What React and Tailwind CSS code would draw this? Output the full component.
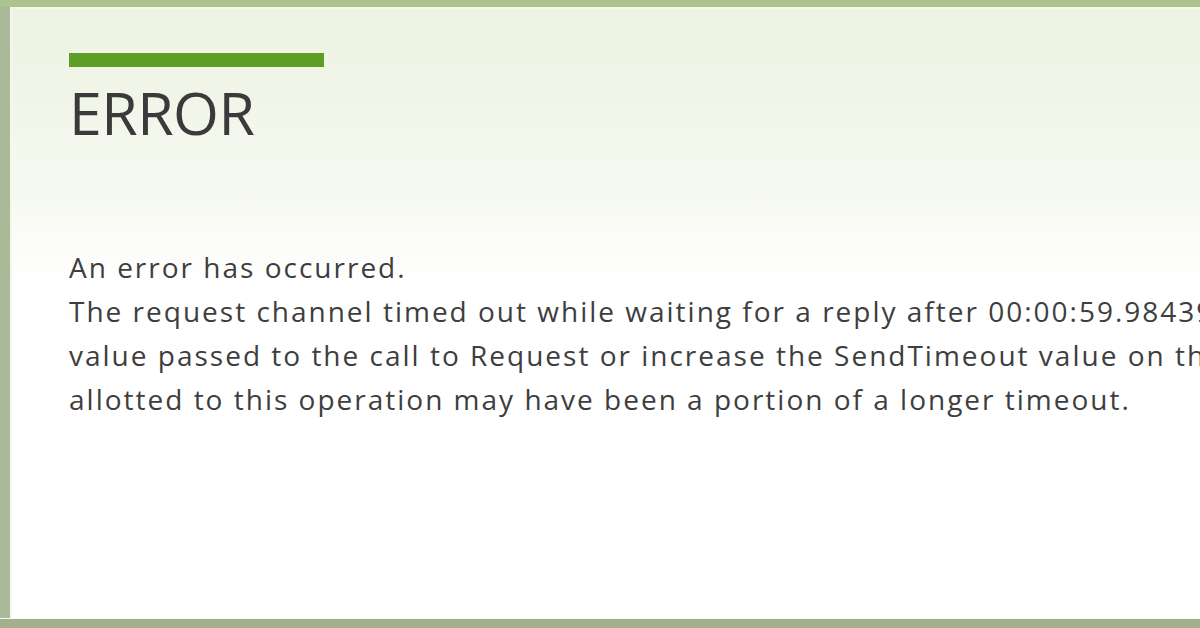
export default function App() {
  const lines = [
    "An error has occurred.",
    "The request channel timed out while waiting for a reply after 00:00:59.9843933. Increase the timeout",
    "value passed to the call to Request or increase the SendTimeout value on the Binding. The time",
    "allotted to this operation may have been a portion of a longer timeout.",
  ];
  return (
    <div
      className="w-[1200px] h-[628px] overflow-hidden flex flex-col bg-white"
      style={{ fontFamily: '"Open Sans", "Noto Sans", sans-serif' }}
    >
      {/* top frame edge */}
      <div className="h-[7px] shrink-0 bg-[#adc38f]" />
      <div className="flex flex-1 min-h-0">
        {/* left frame edge */}
        <div className="w-[10px] shrink-0 bg-[#aab998]" />
        <div className="flex-1 min-w-0 overflow-hidden bg-gradient-to-b from-[#edf2e2] via-[#f6f9f0] via-30% to-white to-45% pl-[57px] pt-[44px] border-l-2 border-l-[#f3f8ea] border-t-2 border-t-[#f2f9e4]">
          <div className="w-[255px] h-[14px] bg-[#5c9f24]" />
          <h1 className="mt-[15px] text-[59px] leading-[60px] font-normal text-[#3a3a3a] tracking-[-0.5px]">
            ERROR
          </h1>
          <div className="mt-[103px] text-[28px] leading-[44px] tracking-[2px] text-[#3e3e3e]">
            {lines.map((t) => (
              <div key={t} className="whitespace-nowrap">
                {t}
              </div>
            ))}
          </div>
        </div>
      </div>
      {/* bottom frame edge */}
      <div className="h-[10px] shrink-0 bg-[#a4af8d] border-t border-t-[#f6f9ec]" />
    </div>
  );
}
